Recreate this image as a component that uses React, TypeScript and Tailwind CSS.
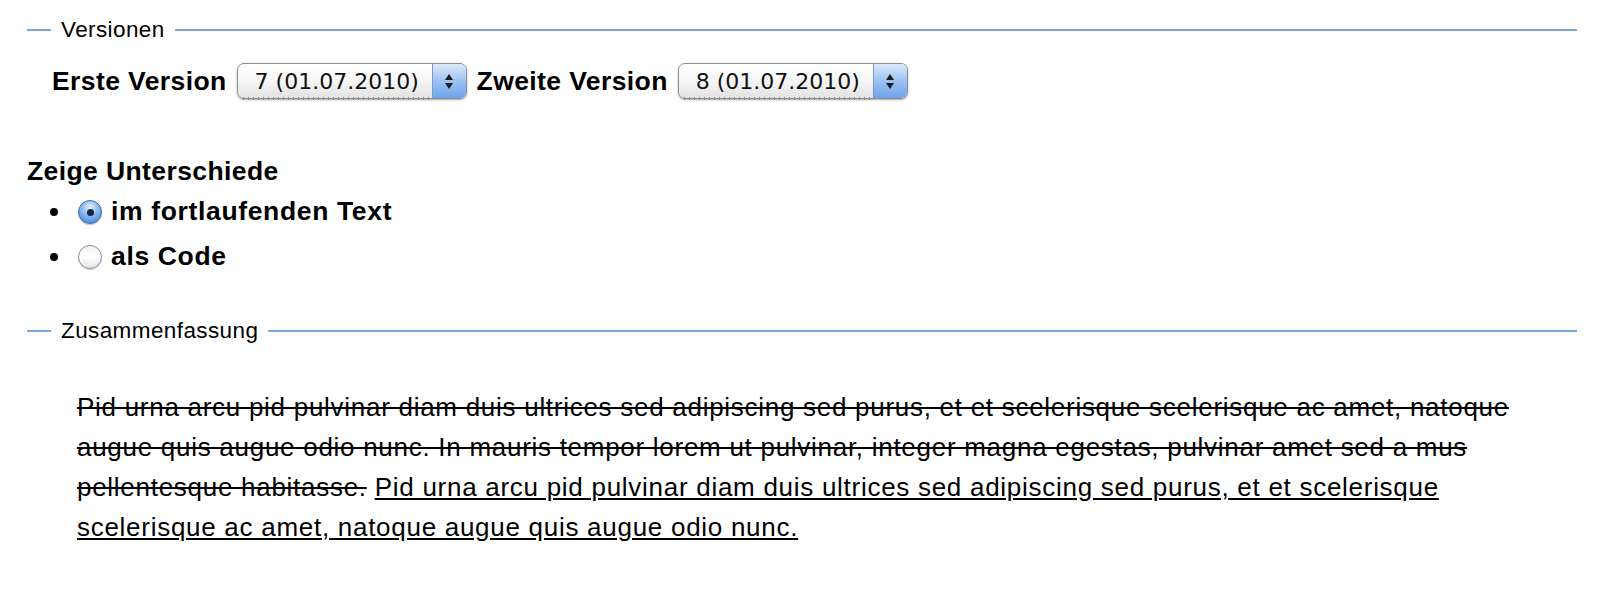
import React from 'react';

const sans = "font-['Liberation_Sans',Arial,sans-serif]";

function Legend({ label }: { label: string }) {
  return (
    <div className="flex items-center h-[24px]">
      <div className="w-[24px] h-[2px] bg-[#78a7de]" />
      <span className="px-[10px] text-[22.5px] tracking-[0.4px] leading-none">{label}</span>
      <div className="flex-1 h-[2px] bg-[#78a7de]" />
    </div>
  );
}

function AquaSelect({ value }: { value: string }) {
  return (
    <div className="relative w-[230px] h-[37px] font-normal tracking-normal">
      <div className="flex h-[36px] rounded-[7px] border border-[#8e8e8e] overflow-hidden shadow-[0_1px_2px_rgba(0,0,0,0.35)] bg-gradient-to-b from-white via-[#f6f6f6] to-[#e2e2e2]">
        <div className="flex-1 flex items-center pl-[17px] whitespace-nowrap font-['DejaVu_Sans',sans-serif] text-[22px] text-[#111]">
          {value}
        </div>
        <div className="w-[34px] flex flex-col items-center justify-center gap-[3px] border-l border-[#7d98c4] bg-gradient-to-b from-[#dbe9fa] via-[#9cc2f0] to-[#6ea4ea]">
          <div className="w-0 h-0 border-l-[4px] border-r-[4px] border-b-[6px] border-l-transparent border-r-transparent border-b-[#1b1b1b]" />
          <div className="w-0 h-0 border-l-[4px] border-r-[4px] border-t-[6px] border-l-transparent border-r-transparent border-t-[#1b1b1b]" />
        </div>
      </div>
      <div className="absolute left-[6px] right-[34px] bottom-0 h-[3px] bg-[repeating-linear-gradient(90deg,#8a8a8a_0_1px,transparent_1px_5px)]" />
    </div>
  );
}

function Radio({ checked }: { checked?: boolean }) {
  if (checked) {
    return (
      <span className="flex items-center justify-center w-[24px] h-[24px] rounded-full border border-[#3f66a3] bg-[radial-gradient(circle_at_50%_30%,#e8f2ff_0%,#8fbcf2_40%,#3a7cd8_100%)] shadow-[0_1px_1px_rgba(0,0,0,0.25)]">
        <span className="w-[7px] h-[7px] rounded-full bg-[#17263f]" />
      </span>
    );
  }
  return (
    <span className="w-[24px] h-[24px] rounded-full border border-[#8c8c8c] bg-gradient-to-b from-[#f4f4f4] via-white to-[#e6e6e6] shadow-[0_1px_1px_rgba(0,0,0,0.2)]" />
  );
}

function Option({ checked, label }: { checked?: boolean; label: string }) {
  return (
    <li className="flex items-center h-[45px]">
      <span className="w-[8px] h-[8px] rounded-full bg-black ml-[23px] mr-[20px]" />
      <Radio checked={checked} />
      <span className="ml-[9px] font-bold text-[26.5px] tracking-[0.65px]">{label}</span>
    </li>
  );
}

export default function App() {
  return (
    <div className={`${sans} w-[1602px] h-[589px] bg-white text-black overflow-hidden pl-[27px] pr-[25px] pt-[18px]`}>
      {/* Versionen */}
      <Legend label="Versionen" />
      <div className="flex items-center gap-[10px] pl-[25px] mt-[20px] font-bold text-[26.5px] tracking-[0.4px]">
        <span>Erste Version</span>
        <AquaSelect value="7 (01.07.2010)" />
        <span>Zweite Version</span>
        <AquaSelect value="8 (01.07.2010)" />
      </div>

      <div className="mt-[53px] font-bold text-[26.5px] tracking-[0.4px] leading-[32px]">Zeige Unterschiede</div>
      <ul className="mt-[3px]">
        <Option checked label="im fortlaufenden Text" />
        <Option label="als Code" />
      </ul>

      {/* Zusammenfassung */}
      <div className="mt-[39px]">
        <Legend label="Zusammenfassung" />
      </div>
      <p className="mt-[44px] pl-[50px] pr-[50px] text-[26px] tracking-[0.72px] leading-[40px]">
        <span className="line-through">
          Pid urna arcu pid pulvinar diam duis ultrices sed adipiscing sed purus, et et scelerisque scelerisque ac amet, natoque augue quis augue odio nunc. In mauris tempor lorem ut pulvinar, integer magna egestas, pulvinar amet sed a mus pellentesque habitasse.
        </span>{' '}
        <span className="underline">
          Pid urna arcu pid pulvinar diam duis ultrices sed adipiscing sed purus, et et scelerisque scelerisque ac amet, natoque augue quis augue odio nunc.
        </span>
      </p>
    </div>
  );
}
